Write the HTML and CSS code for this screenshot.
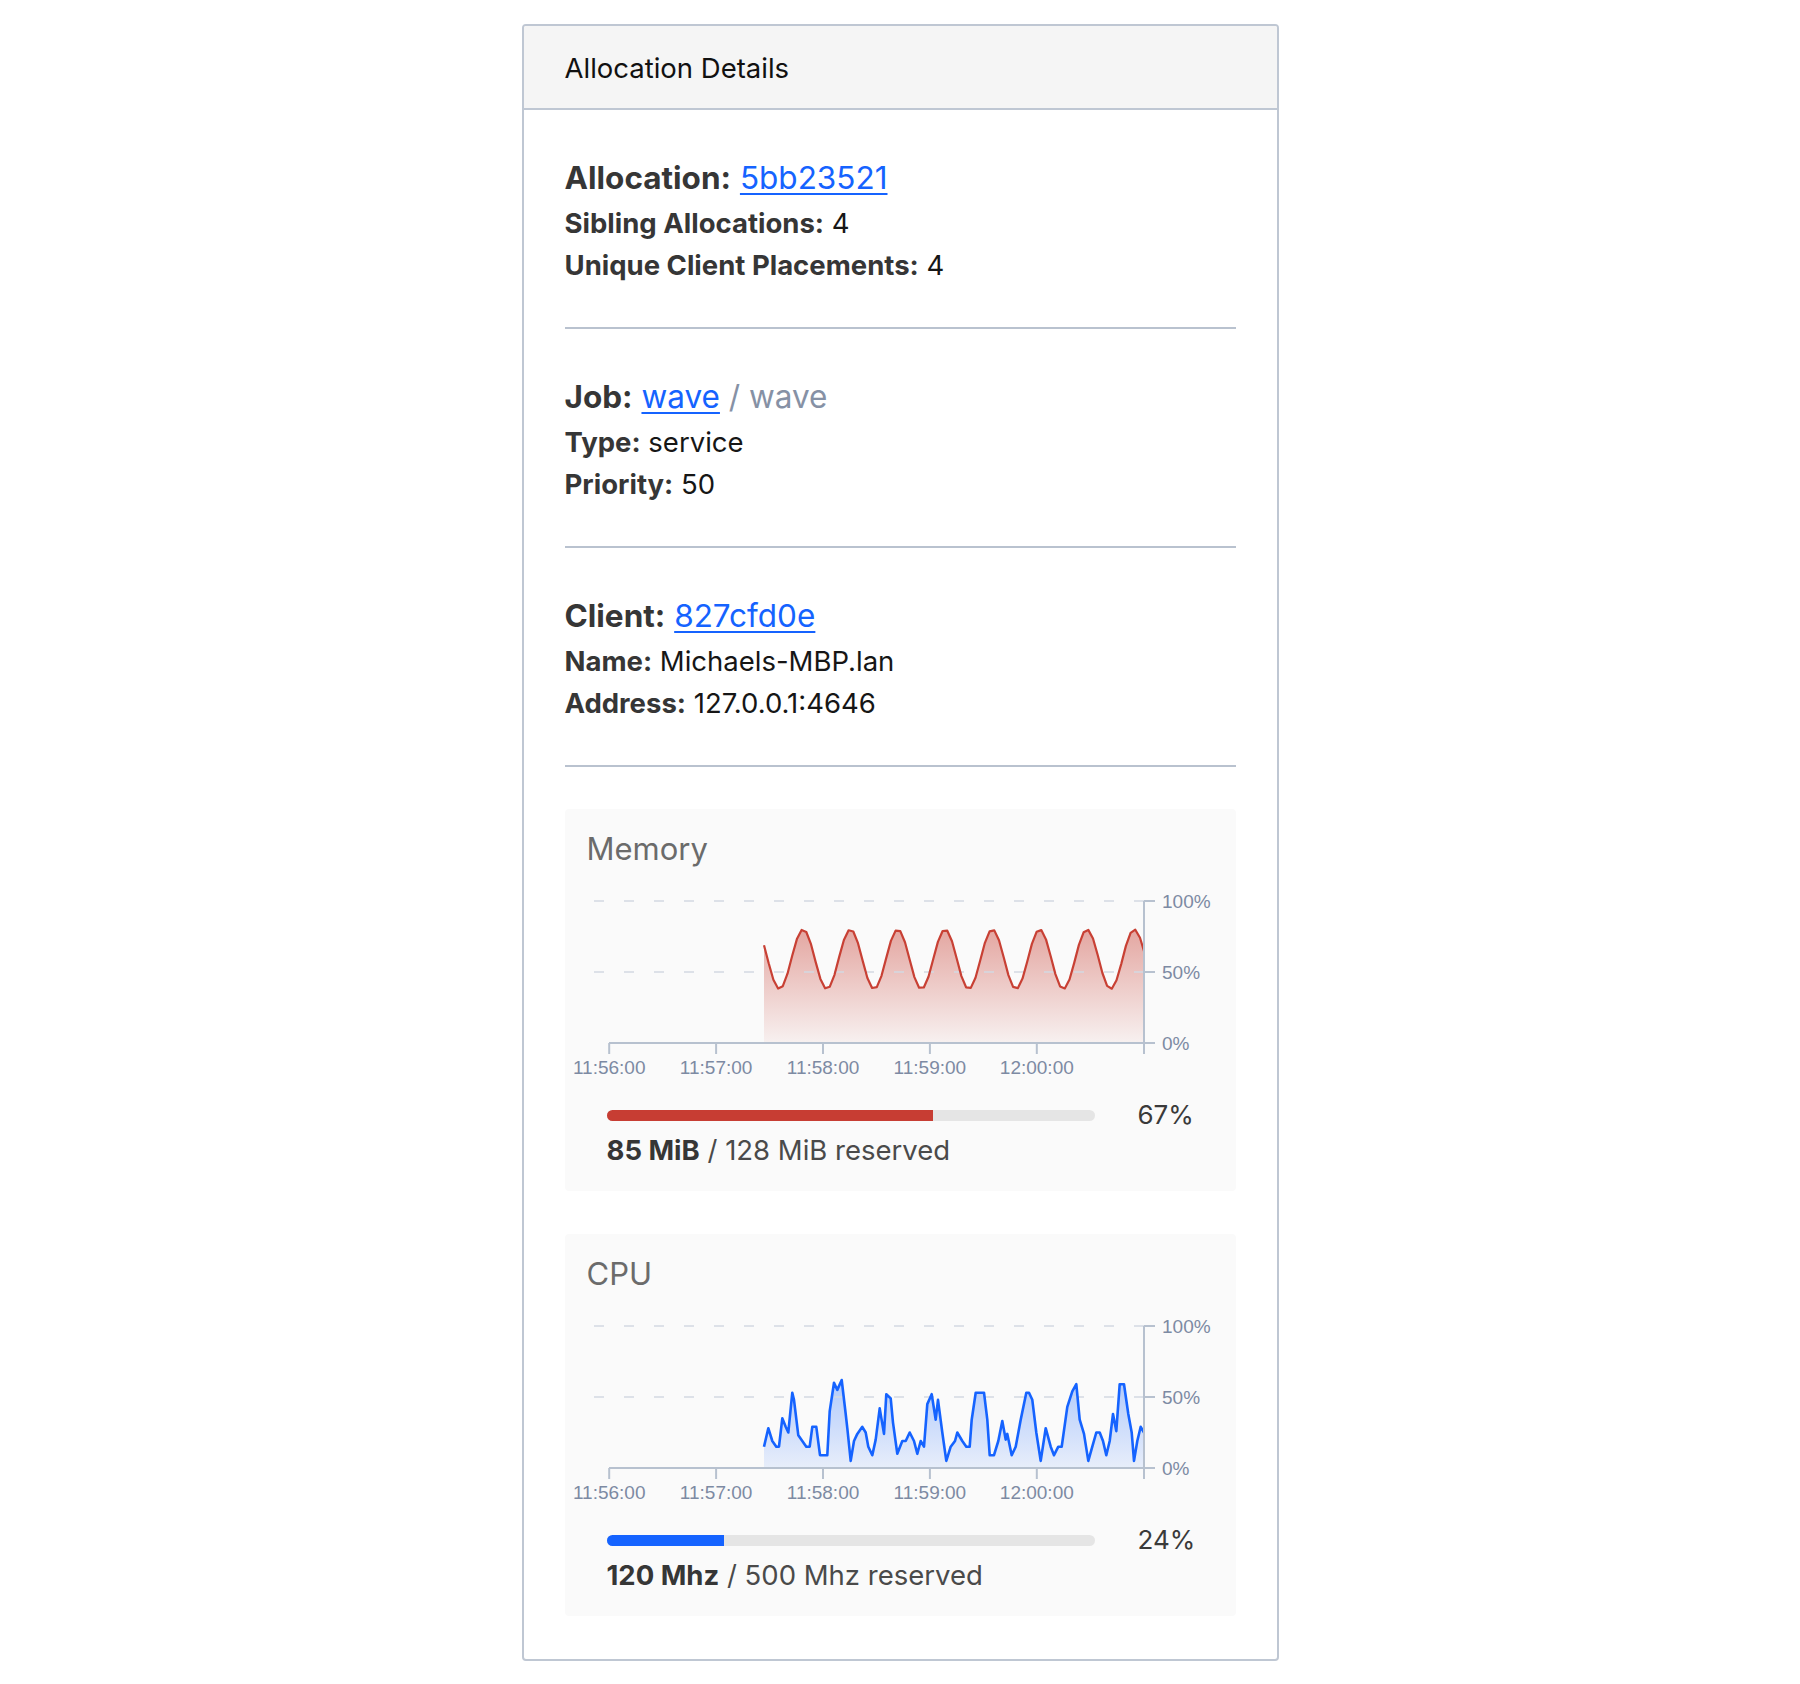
FILE: index.html
```html
<!DOCTYPE html>
<html lang="en">

<head>
  <meta charset="UTF-8">
  <meta name="viewport" content="width=device-width, initial-scale=1.0" />
  <title>Allocation Details</title>
  <link rel="stylesheet" href="styles.css">
</head>

<body>
  <div class="panel">
    <div class="panel-heading">Allocation Details</div>

    <div class="panel-body">
      <div class="section">
        <h3 class="title"><strong>Allocation:</strong> <a href="#">5bb23521</a></h3>
        <p><strong>Sibling Allocations:</strong> 4</p>
        <p><strong>Unique Client Placements:</strong> 4</p>
      </div>

      <div class="section">
        <h3 class="title"><strong>Job:</strong> <a href="#">wave</a> <span class="muted">/ wave</span></h3>
        <p><strong>Type:</strong> service</p>
        <p><strong>Priority:</strong> 50</p>
      </div>

      <div class="section">
        <h3 class="title"><strong>Client:</strong> <a href="#">827cfd0e</a></h3>
        <p><strong>Name:</strong> Michaels-MBP.lan</p>
        <p><strong>Address:</strong> 127.0.0.1:4646</p>
      </div>

      <div class="section metrics">
        <div class="metric">
          <h4 class="metric-title">Memory</h4>
          <svg class="chart" id="memChart" viewBox="0 0 670 232" width="670" height="232">
            <defs>
              <linearGradient id="memFill" x1="0" y1="0" x2="0" y2="1">
                <stop offset="0" stop-color="#c84034" stop-opacity="0.45" />
                <stop offset="1" stop-color="#c84034" stop-opacity="0.05" />
              </linearGradient>
            </defs>
            <path class="area" fill="url(#memFill)" />
            <g class="grid">
              <line x1="29" y1="34" x2="579" y2="34" />
              <line x1="29" y1="105" x2="579" y2="105" />
            </g>
            <path class="line memory" />
            <g class="axis">
              <line x1="44" y1="176" x2="579" y2="176" />
              <line x1="579" y1="34" x2="579" y2="187" />
              <line x1="579" y1="34" x2="590" y2="34" />
              <line x1="579" y1="105" x2="590" y2="105" />
              <line x1="579" y1="176" x2="590" y2="176" />
              <line x1="44.2" y1="176" x2="44.2" y2="187" />
              <line x1="151.1" y1="176" x2="151.1" y2="187" />
              <line x1="258" y1="176" x2="258" y2="187" />
              <line x1="364.9" y1="176" x2="364.9" y2="187" />
              <line x1="471.8" y1="176" x2="471.8" y2="187" />
            </g>
            <g class="tick-label">
              <text x="597" y="41">100%</text>
              <text x="597" y="112">50%</text>
              <text x="597" y="183">0%</text>
              <text class="mid" x="44.2" y="207">11:56:00</text>
              <text class="mid" x="151.1" y="207">11:57:00</text>
              <text class="mid" x="258" y="207">11:58:00</text>
              <text class="mid" x="364.9" y="207">11:59:00</text>
              <text class="mid" x="471.8" y="207">12:00:00</text>
            </g>
          </svg>
          <div class="usage">
            <div class="usage-row">
              <div class="bar"><div class="bar-fill memory" style="width: 67%"></div></div>
              <span class="pct">67%</span>
            </div>
            <p class="reserved"><strong>85 MiB</strong> / 128 MiB reserved</p>
          </div>
        </div>

        <div class="metric">
          <h4 class="metric-title">CPU</h4>
          <svg class="chart" id="cpuChart" viewBox="0 0 670 232" width="670" height="232">
            <defs>
              <linearGradient id="cpuFill" x1="0" y1="0" x2="0" y2="1">
                <stop offset="0" stop-color="#1563ff" stop-opacity="0.32" />
                <stop offset="1" stop-color="#1563ff" stop-opacity="0.08" />
              </linearGradient>
            </defs>
            <path class="area" fill="url(#cpuFill)" />
            <g class="grid">
              <line x1="29" y1="34" x2="579" y2="34" />
              <line x1="29" y1="105" x2="579" y2="105" />
            </g>
            <path class="line cpu" />
            <g class="axis">
              <line x1="44" y1="176" x2="579" y2="176" />
              <line x1="579" y1="34" x2="579" y2="187" />
              <line x1="579" y1="34" x2="590" y2="34" />
              <line x1="579" y1="105" x2="590" y2="105" />
              <line x1="579" y1="176" x2="590" y2="176" />
              <line x1="44.2" y1="176" x2="44.2" y2="187" />
              <line x1="151.1" y1="176" x2="151.1" y2="187" />
              <line x1="258" y1="176" x2="258" y2="187" />
              <line x1="364.9" y1="176" x2="364.9" y2="187" />
              <line x1="471.8" y1="176" x2="471.8" y2="187" />
            </g>
            <g class="tick-label">
              <text x="597" y="41">100%</text>
              <text x="597" y="112">50%</text>
              <text x="597" y="183">0%</text>
              <text class="mid" x="44.2" y="207">11:56:00</text>
              <text class="mid" x="151.1" y="207">11:57:00</text>
              <text class="mid" x="258" y="207">11:58:00</text>
              <text class="mid" x="364.9" y="207">11:59:00</text>
              <text class="mid" x="471.8" y="207">12:00:00</text>
            </g>
          </svg>
          <div class="usage">
            <div class="usage-row">
              <div class="bar"><div class="bar-fill cpu" style="width: 24%"></div></div>
              <span class="pct">24%</span>
            </div>
            <p class="reserved"><strong>120 Mhz</strong> / 500 Mhz reserved</p>
          </div>
        </div>
      </div>
    </div>
  </div>

  <script>
    // chart area: 0% at y=176, 100% at y=34
    const toY = v => (176 - v * 1.42).toFixed(1);

    function draw(svg, points) {
      const line = points.map((p, i) => (i ? "L" : "M") + p[0] + " " + toY(p[1])).join(" ");
      const first = points[0][0];
      const last = points[points.length - 1][0];
      svg.querySelector(".line").setAttribute("d", line);
      svg.querySelector(".area").setAttribute("d", line + " L" + last + " 176 L" + first + " 176 Z");
    }

    // memory: steady wave between ~38% and ~80%
    const mem = [];
    for (let x = 199; x < 579; x += 4.7) {
      mem.push([x.toFixed(1), 59 - 21 * Math.cos(2 * Math.PI * (x - 214.5) / 47.3)]);
    }
    mem.push([579, 59 - 21 * Math.cos(2 * Math.PI * (579 - 214.5) / 47.3)]);
    draw(document.getElementById("memChart"), mem);

    const cpu = [
      [199, 15], [203.3, 28], [207.3, 19], [211.3, 15], [214, 15], [217.3, 35], [220.7, 29], [223.3, 25],
      [227.3, 53], [229, 48], [233.3, 23], [237.3, 19], [241.3, 15], [244.7, 15], [247.3, 29], [251.3, 29],
      [255, 9], [262.3, 9], [264.7, 40], [269, 60], [272.3, 55], [276.7, 62], [280.7, 38], [282.3, 28],
      [285.7, 5], [289, 19], [292.3, 24], [297.3, 29], [300.7, 25], [303.3, 15], [307.3, 9], [310.7, 20],
      [314.7, 42], [319, 24], [321.3, 52], [325.7, 49], [328, 32], [332.3, 10], [337.3, 19], [340.7, 19],
      [344.7, 25], [349, 19], [352.3, 10], [355.7, 19], [359, 15], [362.3, 45], [366.7, 52], [370.7, 34],
      [373, 48], [377.3, 25], [381.3, 5], [385.7, 15], [390, 19], [392.3, 25], [397.3, 19], [401.3, 15],
      [404.7, 15], [406.7, 34], [410.7, 53], [419, 53], [422.3, 34], [424.7, 9], [429, 9], [433.3, 19],
      [437.3, 33], [440.7, 20], [442.3, 24], [446.7, 9], [450.7, 15], [455.7, 34], [461.3, 53], [464, 53],
      [467.3, 48], [471.3, 25], [475.7, 5], [480.7, 28], [485.7, 15], [489, 9], [493.3, 15], [496.7, 15],
      [502.3, 43], [507.3, 54], [511.3, 59], [514.7, 34], [519, 24], [523.3, 5], [527.3, 15], [531.3, 25],
      [534.7, 25], [538, 19], [541.3, 9], [544.7, 19], [548, 38], [551.3, 26], [554.7, 59], [559, 59],
      [563.3, 38], [566.7, 25], [569, 5], [572.3, 19], [575.7, 29], [579, 25]
    ];
    draw(document.getElementById("cpuChart"), cpu);
  </script>
</body>

</html>
```

FILE: styles.css
```css
* {
  box-sizing: border-box;
  margin: 0;
  padding: 0;
}

body {
  font-family: Inter, 'Noto Sans', sans-serif;
  background: #fff;
  color: #161616;
}

.panel {
  width: 757px;
  margin: 24px auto 0;
  border: 2px solid #bfc7d3;
  border-radius: 4px;
}

.panel-heading {
  background: #f5f5f5;
  border-bottom: 2px solid #bfc7d3;
  border-radius: 2px 2px 0 0;
  padding: 22px 41px 20px;
  font-size: 27.5px;
  line-height: 40px;
  color: #111;
}

.panel-body {
  padding: 0 41px 43px;
}

.section {
  padding: 44px 0 41px;
  border-bottom: 2px solid #b9c2cf;
}

.section.metrics {
  border-bottom: 0;
  padding: 42px 0 0;
}

.title {
  font-size: 31.5px;
  line-height: 48px;
  font-weight: 400;
}

.section p {
  font-size: 27.5px;
  line-height: 42px;
}

strong {
  font-weight: 700;
  color: #363636;
}

a {
  color: #1563ff;
  text-decoration-thickness: 2px;
  text-underline-offset: 4px;
}

.muted {
  color: #8691a5;
}

/* metric boxes */
.metric {
  background: #fafafa;
  border-radius: 4px;
  padding: 22px 0 25px;
}

.metric + .metric {
  margin-top: 43px;
}

.metric-title {
  padding: 0 22px;
  font-size: 31px;
  line-height: 36px;
  font-weight: 400;
  color: #6b6b6b;
}

.chart {
  display: block;
  width: 670px;
  height: 232px;
}

.grid line {
  stroke: #d3d9e2;
  stroke-width: 1.5;
  stroke-dasharray: 10 20;
}

.axis line {
  stroke: #b7c1cf;
  stroke-width: 2;
}

.line {
  fill: none;
  stroke-width: 2.2;
  stroke-linejoin: round;
}

.line.memory {
  stroke: #c84034;
}

.line.cpu {
  stroke: #1563ff;
  stroke-width: 2.6;
}

.tick-label text {
  font-family: 'Liberation Sans', Arial, sans-serif;
  font-size: 19px;
  fill: #7d8aa3;
}

.tick-label .mid {
  text-anchor: middle;
}

.usage {
  padding: 0 42px;
}

.usage-row {
  display: flex;
  align-items: center;
  gap: 43px;
  height: 32px;
}

.bar {
  flex: 1;
  height: 11px;
  background: #e5e5e5;
  border-radius: 6px;
  overflow: hidden;
}

.bar-fill {
  height: 100%;
}

.bar-fill.memory {
  background: #c73d33;
}

.bar-fill.cpu {
  background: #1563ff;
}

.pct {
  width: 56px;
  text-align: right;
  font-size: 26px;
  line-height: 32px;
  color: #3a3a3a;
}

.usage .reserved {
  margin-top: 3px;
  font-size: 27.5px;
  line-height: 32px;
  color: #4a4a4a;
}
```
